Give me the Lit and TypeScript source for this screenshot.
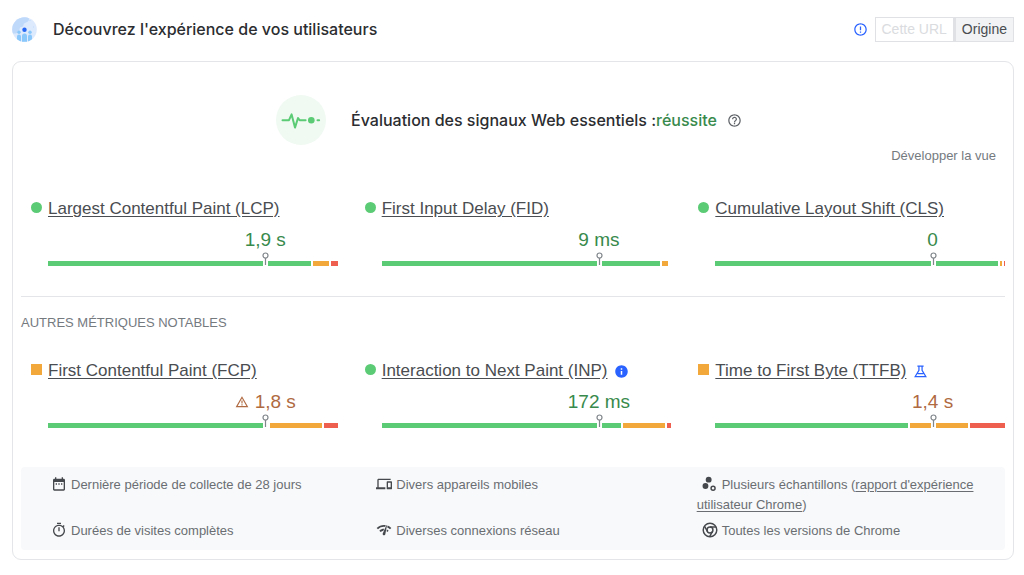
import { LitElement, html, svg, css, TemplateResult } from "lit";
import { customElement, property } from "lit/decorators.js";
import { classMap } from "lit/directives/class-map.js";
import { styleMap } from "lit/directives/style-map.js";

type Rating = "good" | "average" | "poor";

interface Metric {
  name: string;
  value: string;
  rating: Rating;
  warning?: boolean;
  badge?: "info" | "lab";
  shares: { rating: Rating | "rest"; weight: number }[];
}

const shares = (good: number, average: number, poor: number) => [
  { rating: "good" as const, weight: good },
  { rating: "average" as const, weight: average },
  { rating: "poor" as const, weight: poor },
];

const CORE: Metric[] = [
  { name: "Largest Contentful Paint (LCP)", value: "1,9 s", rating: "good", shares: shares(263, 16, 7) },
  {
    name: "First Input Delay (FID)",
    value: "9 ms",
    rating: "good",
    shares: [
      { rating: "good", weight: 279 },
      { rating: "average", weight: 6 },
      { rating: "rest", weight: 1 },
    ],
  },
  { name: "Cumulative Layout Shift (CLS)", value: "0", rating: "good", shares: shares(283, 2, 1) },
];

const OTHER: Metric[] = [
  { name: "First Contentful Paint (FCP)", value: "1,8 s", rating: "average", warning: true, shares: shares(222, 52, 14) },
  { name: "Interaction to Next Paint (INP)", value: "172 ms", rating: "good", badge: "info", shares: shares(240, 42, 4) },
  { name: "Time to First Byte (TTFB)", value: "1,4 s", rating: "average", badge: "lab", shares: shares(193, 58, 35) },
];

const icons = {
  calendar: svg`<path d="M9 11H7v2h2v-2zm4 0h-2v2h2v-2zm4 0h-2v2h2v-2zm2-7h-1V2h-2v2H8V2H6v2H5c-1.11 0-1.99.9-1.99 2L3 20c0 1.1.89 2 2 2h14c1.1 0 2-.9 2-2V6c0-1.1-.9-2-2-2zm0 16H5V9h14v11z"/>`,
  devices: svg`<path d="M4 6h18V4H4c-1.1 0-2 .9-2 2v11H0v3h14v-3H4V6zm19 2h-6c-.55 0-1 .45-1 1v10c0 .55.45 1 1 1h6c.55 0 1-.45 1-1V9c0-.55-.45-1-1-1zm-1 9h-4v-7h4v7z"/>`,
  timer: svg`<path d="M15 1H9v2h6V1zm-4 13h2V8h-2v6zm8.03-6.61l1.42-1.42c-.43-.51-.9-.99-1.41-1.41l-1.42 1.42C16.07 4.74 14.12 4 12 4c-4.97 0-9 4.03-9 9s4.02 9 9 9 9-4.03 9-9c0-2.12-.74-4.07-1.97-5.61zM12 20c-3.87 0-7-3.13-7-7s3.13-7 7-7 7 3.13 7 7-3.13 7-7 7z"/>`,
  network: svg`<path d="M15.9 5c-.17 0-.32.09-.41.23l-.07.15-5.18 11.65c-.16.29-.26.61-.26.96 0 1.11.9 2.01 2.01 2.01.96 0 1.77-.68 1.96-1.59l.01-.03L16.4 5.5c0-.28-.22-.5-.5-.5zM1 9l2 2c2.88-2.88 6.79-4.08 10.53-3.62l1.19-2.68C9.89 3.84 4.74 5.27 1 9zm20 2l2-2c-1.64-1.64-3.55-2.82-5.59-3.57l-.53 2.82c1.5.62 2.9 1.53 4.12 2.75zm-4 4l2-2c-.8-.8-1.7-1.42-2.66-1.89l-.55 2.92c.42.27.83.59 1.21.97zM5 13l2 2c1.13-1.13 2.56-1.79 4.03-2l1.28-2.88c-2.63-.08-5.3.87-7.31 2.88z"/>`,
  samples: svg`<circle cx="10" cy="5.500" r="4.400"/><circle cx="5.200" cy="15" r="4.400"/><circle cx="16.600" cy="18.400" r="3" fill="none" stroke="currentColor" stroke-width="2.200"/>`,
  chrome: svg`<g fill="none" stroke="currentColor" stroke-width="2.200"><circle cx="12" cy="12" r="10.200"/><circle cx="12" cy="12" r="4.400"/><path d="M12 7.600h9.200M8.200 14.200L3.600 6.200M15.800 14.200L11.200 22.200"/></g>`,
  help: svg`<path d="M11 18h2v-2h-2v2zm1-16C6.48 2 2 6.48 2 12s4.48 10 10 10 10-4.48 10-10S17.52 2 12 2zm0 18c-4.41 0-8-3.59-8-8s3.59-8 8-8 8 3.59 8 8-3.59 8-8 8zm0-14c-2.21 0-4 1.79-4 4h2c0-1.1.9-2 2-2s2 .9 2 2c0 2-3 1.75-3 5h2c0-2.25 3-2.5 3-5 0-2.21-1.79-4-4-4z"/>`,
  alert: svg`<path d="M11 15h2v2h-2zm0-8h2v6h-2zm.99-5C6.47 2 2 6.48 2 12s4.47 10 9.99 10C17.52 22 22 17.52 22 12S17.52 2 11.99 2zM12 20c-4.42 0-8-3.58-8-8s3.58-8 8-8 8 3.58 8 8-3.58 8-8 8z"/>`,
  info: svg`<path d="M12 2C6.48 2 2 6.48 2 12s4.48 10 10 10 10-4.48 10-10S17.52 2 12 2zm1.2 15h-2.4v-6h2.4v6zm0-8h-2.4V6.600h2.400V9z"/>`,
  lab: svg`<path fill="none" stroke="currentColor" stroke-width="2" d="M7 3.500h10M9.500 4v6L3.500 20h17L14.500 10V4M7.500 15.500h9"/>`,
  warning: svg`<path fill="none" stroke="currentColor" stroke-width="2" d="M12 4L2.800 20h18.400z"/><path d="M11 9.500h2v5h-2zM11 16h2v2h-2z"/>`,
};

const icon = (shape: TemplateResult | unknown, cls: string) =>
  html`<svg class="icon ${cls}" viewBox="0 0 24 24" aria-hidden="true">${shape}</svg>`;

const base = css`
  * { box-sizing: border-box; }
  .icon { display: block; width: 16px; height: 16px; fill: currentColor; flex: none; }
  .icon.small { width: 15px; height: 15px; }
  .icon-button {
    display: block; padding: 0; border: 0; background: none;
    color: inherit; cursor: pointer;
  }
  a { color: inherit; text-underline-offset: 2px; }
`;

@customElement("metric-card")
export class MetricCard extends LitElement {
  @property({ attribute: false }) metric!: Metric;

  static styles = [base, css`
    :host { display: block; min-width: 0; }
    .name {
      display: flex; align-items: center; gap: 6px;
      font-size: 17px; line-height: 20px; color: #4a4d51;
    }
    .bullet { width: 11px; height: 11px; margin-bottom: 3px; flex: none; }
    .bullet.good { border-radius: 50%; background: #5bcb75; }
    .bullet.average { background: #f3a83b; }
    .badge { margin-left: 1px; color: #2962ff; }
    .body { margin-left: 17px; padding-top: 7px; }
    .readout { display: flex; margin-left: 50%; justify-content: center; }
    .value {
      display: flex; align-items: center; gap: 6px;
      font-size: 19px; line-height: 28px; color: #388a4c;
    }
    .value.average { color: #b06a42; }
    .icon.warning { width: 14px; height: 14px; }
    .bar { position: relative; display: flex; gap: 2px; height: 5px; margin-top: 7px; }
    .good-share { background: #5bcb75; }
    .average-share { background: #f3a83b; }
    .poor-share { background: #ee5f4f; }
    .pin {
      position: absolute; left: 75%; top: -9px; width: 7px; height: 14px;
      margin-left: -3px; display: block;
    }
  `];

  render() {
    const m = this.metric;
    return html`
      <div class="name">
        <span class=${classMap({ bullet: true, [m.rating]: true })}></span>
        <a href="#">${m.name}</a>
        ${m.badge
          ? html`<button class="icon-button badge" type="button"
              aria-label=${m.badge === "info" ? "Informations" : "Expérimental"}>
              ${icon(icons[m.badge], "small")}</button>`
          : null}
      </div>
      <div class="body">
        <div class="readout">
          <span class=${classMap({ value: true, [m.rating]: true })}>
            ${m.warning ? icon(icons.warning, "warning") : null}<span>${m.value}</span>
          </span>
        </div>
        <div class="bar">
          ${m.shares.map((s) => html`<span class="${s.rating}-share" style=${styleMap({ flex: `${s.weight} 1 0` })}></span>`)}
          <svg class="pin" viewBox="0 0 7 14" aria-hidden="true">
            <path d="M1 9h5v5H1z" fill="#fff"/>
            <circle cx="3.500" cy="3.500" r="2.500" fill="#fff" stroke="#80868b" stroke-width="1.200"/>
            <path d="M3.500 6v7" stroke="#80868b" stroke-width="1.200"/>
          </svg>
        </div>
      </div>
    `;
  }
}

@customElement("app-root")
export class AppRoot extends LitElement {
  static styles = [base, css`
    :host {
      display: block; min-height: 100vh; padding: 16px 10px 14px 12px; background: #fff;
      font-family: "Liberation Sans", Arial, sans-serif; font-size: 13px; line-height: 20px;
      color: #5f6368; box-sizing: border-box;
    }
    h1, h2, h3, ul { margin: 0; padding: 0; font-weight: 400; }
    .top { display: flex; align-items: center; height: 26px; }
    .people { width: 25px; height: 25px; flex: none; }
    h1, h2 { font-family: Inter, "Open Sans", sans-serif; font-weight: 500; font-size: 16px; line-height: 24px; color: #2b2d30; }
    h1 { margin-left: 16px; flex: 1; }
    .scope-info { color: #2962ff; margin-right: 7px; }
    .scope { display: flex; }
    .scope button {
      height: 25px; padding: 0 6px; border: 1px solid #dfe1e5; background: #fff;
      font-family: inherit; font-size: 14px; line-height: 20px; color: #dadce0;
    }
    .scope .selected { border-left-width: 2px; background: #f1f3f4; color: #4a4d51; }
    .card { margin-top: 19px; border: 1px solid #e3e5e8; border-radius: 9px; padding: 33px 8px 9px; }
    .assessment { display: flex; align-items: center; justify-content: center; padding-right: 8px; }
    .pulse { width: 50px; height: 50px; margin-right: 25px; flex: none; }
    .passed { color: #388a4c; }
    .assessment .icon-button { margin-left: 10px; }
    .expand-row { display: flex; justify-content: flex-end; padding: 1px 9px 0 0; }
    .expand {
      border: 0; padding: 0; background: none; font-family: inherit;
      font-size: 13px; line-height: 20px; color: #757a7f;
    }
    .metrics { display: grid; grid-template-columns: repeat(3, minmax(0, 1fr)); gap: 27px; padding-left: 10px; }
    .core { padding-top: 33px; padding-bottom: 30px; }
    .other { border-top: 1px solid #e3e5e8; padding-top: 16px; }
    h3 { font-size: 13px; line-height: 20px; color: #757a7f; text-transform: uppercase; }
    .other .metrics { padding-top: 28px; }
    .facts {
      display: grid; grid-template-columns: repeat(3, minmax(0, 1fr)); column-gap: 26px; row-gap: 6px;
      margin-top: 39px; padding: 8px 9px 9px 25px; border-radius: 4px; background: #f8f9fa;
      list-style: none; color: #6a6e73;
    }
    .facts .icon { display: inline-block; vertical-align: -3px; margin: 0 4px 0 5px; color: #45484c; }
  `];

  render() {
    return html`
      <header class="top">
        <svg class="people" viewBox="0 0 25 25" aria-hidden="true">
          <defs><clipPath id="disc"><circle cx="12.500" cy="12.500" r="12.300"/></clipPath></defs>
          <g clip-path="url(#disc)">
            <path d="M0 0h25v25H0z" fill="#dde9fd"/>
            <path d="M0 0h16q2 2 0 4.500l-4 2-1 3-3 1-1 4-3 2H0z" fill="#bfd9fb"/>
            <path d="M17 3h2v1h-2zM21 9h1v2h-1z" fill="#cfe2fd"/>
            <g fill="#8ac8fb">
              <circle cx="7" cy="15.300" r="1.700"/><circle cx="18" cy="15.300" r="1.700"/>
              <path d="M5 25v-5.500q0-2 2-2t2 2V25zM10 25v-6q0-2.500 2.500-2.500t2.500 2.500v6zM16 25v-5.500q0-2 2-2t2 2V25z"/>
            </g>
            <circle cx="12.500" cy="12.700" r="2.200" fill="#2667f5"/>
          </g>
        </svg>
        <h1>Découvrez l'expérience de vos utilisateurs</h1>
        <button class="icon-button scope-info" type="button" aria-label="Informations">${icon(icons.alert, "small")}</button>
        <div class="scope">
          <button type="button" disabled>Cette URL</button>
          <button class="selected" type="button">Origine</button>
        </div>
      </header>
      <main class="card">
        <div class="assessment">
          <svg class="pulse" viewBox="0 0 50 50" aria-hidden="true">
            <circle cx="25" cy="25" r="25" fill="#f0faf3"/>
            <path d="M6.500 25.200h6.500l2.600-5.800 3.400 13.200 3-9.600 1.600 2.200h6" fill="none" stroke="#5bcb75" stroke-width="2" stroke-linejoin="round" stroke-linecap="round"/>
            <circle cx="35.300" cy="25.200" r="3.300" fill="#5bcb75"/>
            <path d="M41.500 25.200h1.600" stroke="#5bcb75" stroke-width="2" stroke-linecap="round"/>
          </svg>
          <h2>Évaluation des signaux Web essentiels :<span class="passed">réussite</span></h2>
          <button class="icon-button" type="button" aria-label="Aide">${icon(icons.help, "small")}</button>
        </div>
        <div class="expand-row"><button class="expand" type="button">Développer la vue</button></div>
        <section class="metrics core">
          ${CORE.map((m) => html`<metric-card .metric=${m}></metric-card>`)}
        </section>
        <section class="other">
          <h3>Autres métriques notables</h3>
          <div class="metrics">
            ${OTHER.map((m) => html`<metric-card .metric=${m}></metric-card>`)}
          </div>
        </section>
        <ul class="facts">
          <li>${icon(icons.calendar, "")}Dernière période de collecte de 28 jours</li>
          <li>${icon(icons.devices, "")}Divers appareils mobiles</li>
          <li>${icon(icons.samples, "")}Plusieurs échantillons (<a href="#">rapport d'expérience utilisateur Chrome</a>)</li>
          <li>${icon(icons.timer, "")}Durées de visites complètes</li>
          <li>${icon(icons.network, "")}Diverses connexions réseau</li>
          <li>${icon(icons.chrome, "")}Toutes les versions de Chrome</li>
        </ul>
      </main>
    `;
  }
}
